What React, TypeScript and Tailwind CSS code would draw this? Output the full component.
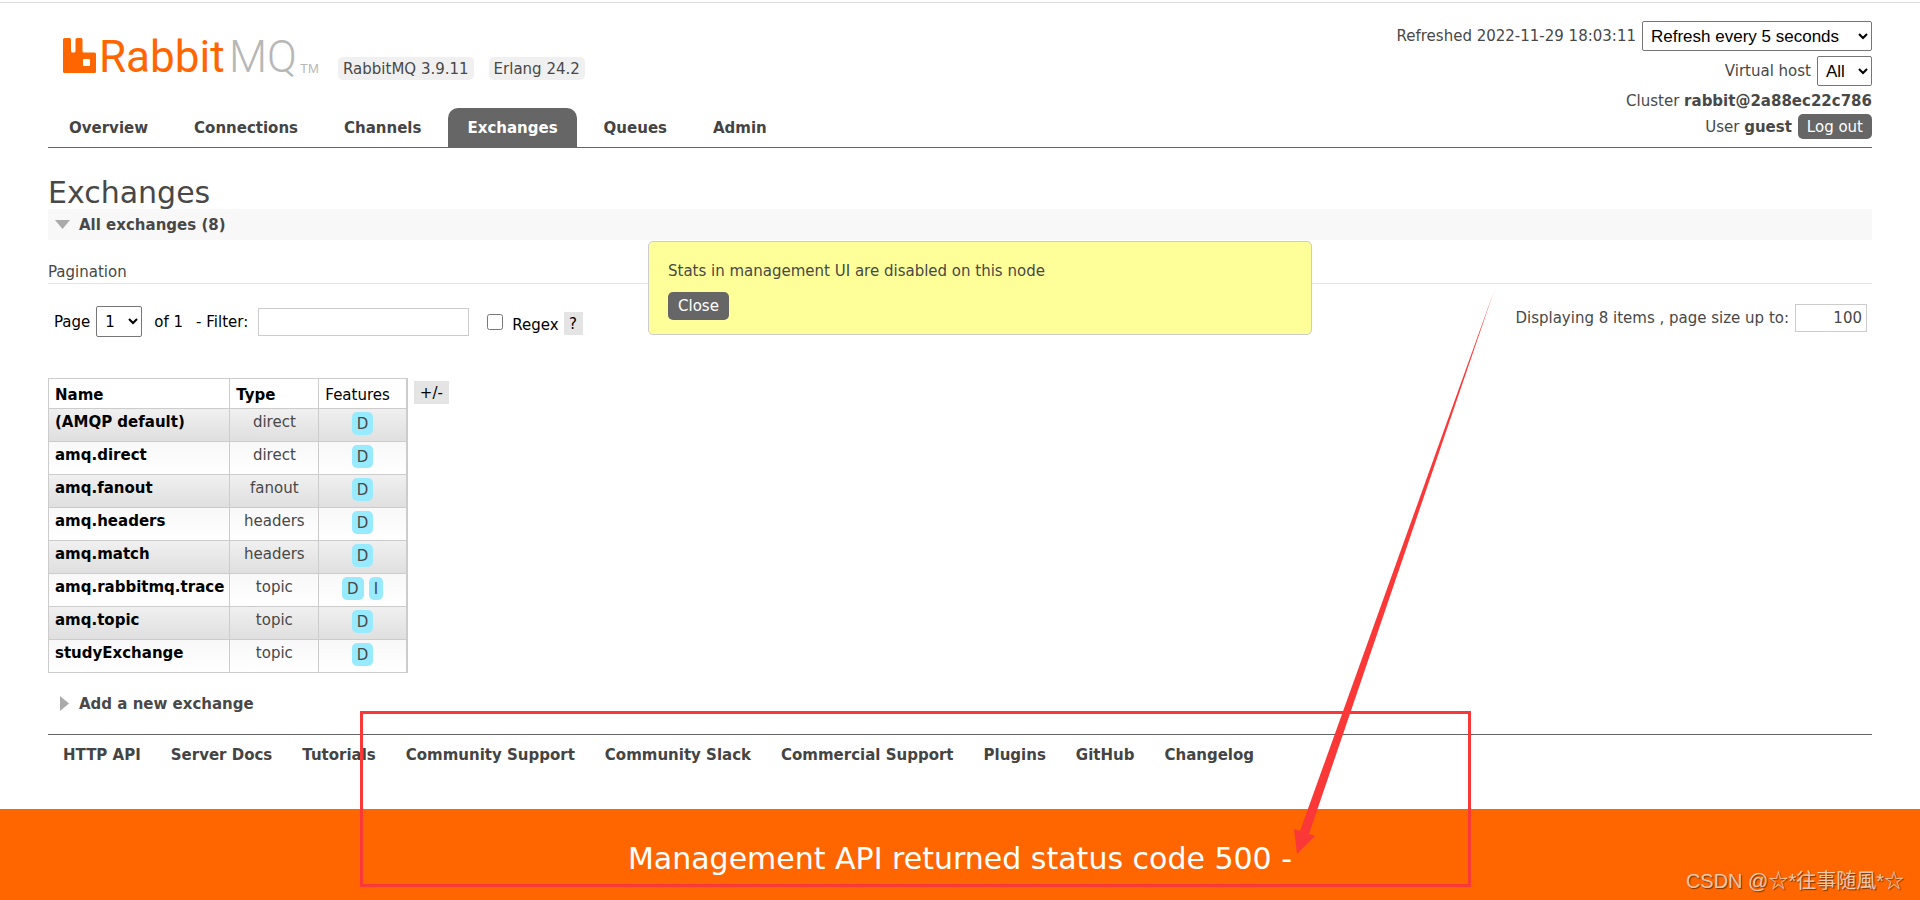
import React from "react";

interface Exchange {
  name: string;
  type: string;
  features: string[];
}

const tabs = ["Overview", "Connections", "Channels", "Exchanges", "Queues", "Admin"];

const exchanges: Exchange[] = [
  { name: "(AMQP default)", type: "direct", features: ["D"] },
  { name: "amq.direct", type: "direct", features: ["D"] },
  { name: "amq.fanout", type: "fanout", features: ["D"] },
  { name: "amq.headers", type: "headers", features: ["D"] },
  { name: "amq.match", type: "headers", features: ["D"] },
  { name: "amq.rabbitmq.trace", type: "topic", features: ["D", "I"] },
  { name: "amq.topic", type: "topic", features: ["D"] },
  { name: "studyExchange", type: "topic", features: ["D"] },
];

const footerLinks = [
  "HTTP API",
  "Server Docs",
  "Tutorials",
  "Community Support",
  "Community Slack",
  "Commercial Support",
  "Plugins",
  "GitHub",
  "Changelog",
];

const Logo = () => (
  <a href="#/" aria-label="RabbitMQ" className="block -mb-[10px]">
    <svg width="258" height="64" viewBox="0 -8 258 64">
      <path
        fill="#f60"
        fillRule="evenodd"
        d="M1.500 4H6.500Q8 4 8 5.500V17Q8 18.500 9.500 18.500H11Q12.500 18.500 12.500 17V5.500Q12.500 4 14 4H18Q19.500 4 19.500 5.500V17Q19.500 18.500 21 18.500H31.500Q33 18.500 33 20V37.500Q33 39 31.500 39H1.500Q0 39 0 37.500V5.500Q0 4 1.500 4ZM21 25Q20 25 20 26V31Q20 32 21 32H26Q27 32 27 31V26Q27 25 26 25Z"
      />
      <text x="36" y="38" fontSize="44" fill="#f60" fontFamily="Roboto, sans-serif">
        Rabbit
      </text>
      <text x="166" y="38" fontSize="44" fill="#b7b7b7" fontFamily="Roboto, sans-serif" fontWeight="300">
        MQ
      </text>
      <text x="237" y="39" fontSize="13" fill="#b7b7b7" fontFamily="'Liberation Sans', sans-serif">
        TM
      </text>
    </svg>
  </a>
);

const Header = () => (
  <header className="border-b border-[#666]">
    <div className="flex justify-between items-end">
      <div>
        <div className="flex items-end ml-[15px] mb-[28px]">
          <Logo />
          <ul className="flex gap-[15px] ml-[17px]">
            <li className="bg-[#f0f0f0] rounded-[5px] px-[5px] h-[23px] leading-6">RabbitMQ 3.9.11</li>
            <li className="bg-[#f0f0f0] rounded-[5px] px-[5px] h-[23px] leading-6">Erlang 24.2</li>
          </ul>
        </div>
        <nav className="flex gap-2 pl-[2px]">
          {tabs.map((tab) => (
            <a
              key={tab}
              href={`#/${tab.toLowerCase()}`}
              className={`font-bold px-[19px] h-[39px] leading-10 rounded-t-[10px] ${
                tab === "Exchanges" ? "bg-[#666] text-white" : "text-[#444]"
              }`}
            >
              {tab}
            </a>
          ))}
        </nav>
      </div>
      <ul className="flex flex-col items-end pb-2">
        <li className="flex items-center gap-[6px] mb-[5px]">
          <label htmlFor="refresh">Refreshed 2022-11-29 18:03:11</label>
          <select id="refresh" className="h-[30px] w-[230px] border border-[#767676] rounded-[2px] bg-white text-black text-[17px] font-['Liberation_Sans',sans-serif] px-1">
            <option>Refresh every 5 seconds</option>
          </select>
        </li>
        <li className="flex items-center gap-[6px]">
          <label htmlFor="vhost">Virtual host</label>
          <select id="vhost" className="h-[30px] w-[55px] border border-[#767676] rounded-[2px] bg-white text-black text-[17px] font-['Liberation_Sans',sans-serif] px-1">
            <option>All</option>
          </select>
        </li>
        <li className="h-[28px] leading-[30px]">
          Cluster <b>rabbit@2a88ec22c786</b>
        </li>
        <li className="flex items-center gap-[6px]">
          <span>
            User <b>guest</b>
          </span>
          <button className="bg-[#666] text-white rounded-[5px] px-[9px] h-[25px]">Log out</button>
        </li>
      </ul>
    </div>
  </header>
);

const Notice = () => (
  <div role="alert" className="absolute left-1/2 top-[241px] -translate-x-1/2 ml-5 w-[664px] bg-[#ff9] border border-[#ccc] rounded-[5px] px-[19px] pt-[19px] pb-[14px]">
    <p className="leading-5 mb-[11px]">Stats in management UI are disabled on this node</p>
    <button className="bg-[#666] text-white rounded-[5px] h-[28px] px-[10px]">Close</button>
  </div>
);

const Pagination = () => (
  <div className="flex justify-between items-start mt-5 h-[74px] pl-[6px] pr-[5px]">
    <div className="flex items-center text-black pt-[2px]">
      <label htmlFor="page">Page</label>
      <select id="page" className="h-[31px] w-[46px] ml-[6px] mr-3 border border-[#767676] rounded-[2px] bg-white px-1">
        <option>1</option>
      </select>
      <span>of 1</span>
      <label htmlFor="filter" className="ml-[13px] mr-[10px]">
        - Filter:
      </label>
      <input id="filter" type="text" className="w-[211px] h-[28px] border border-[#ccc] bg-white px-1" />
      <input id="regex" type="checkbox" className="w-4 h-4 ml-[18px] mr-[9px]" />
      <label htmlFor="regex" className="pt-[6px]">
        Regex
      </label>
      <button className="bg-[#e4e4e4] ml-[5px] mt-1 w-[19px] h-[23px]">?</button>
    </div>
    <div className="flex items-center gap-[6px]">
      <label htmlFor="size">Displaying 8 items , page size up to:</label>
      <input id="size" type="text" defaultValue="100" className="w-[72px] h-[28px] border border-[#ccc] bg-white text-right px-1" />
    </div>
  </div>
);

const ExchangeTable = () => (
  <div className="flex items-start gap-[6px]">
    <table className="border-collapse border border-[#ccc] border-r-2">
      <thead>
        <tr className="h-[30px] text-black text-left">
          <th className="border border-[#ccc] px-[6px] pt-[2px] font-bold">Name</th>
          <th className="border border-[#ccc] px-[6px] pt-[2px] font-bold">Type</th>
          <th className="border border-[#ccc] border-r-2 px-[6px] pt-[2px] font-normal">Features</th>
        </tr>
      </thead>
      <tbody>
        {exchanges.map((exchange, i) => (
          <tr
            key={exchange.name}
            className={`h-[33px] align-top bg-linear-to-b ${
              i % 2 === 0 ? "from-[#f0f0f0] to-[#dfdfdf]" : "from-[#f8f8f8] to-white"
            }`}
          >
            <td className="border border-[#ccc] pl-[6px] pr-[5px] pt-1 leading-[19px]">
              <a href="#/exchanges" className="font-bold text-black">
                {exchange.name}
              </a>
            </td>
            <td className="border border-[#ccc] w-[89px] text-center pt-1 leading-[19px]">{exchange.type}</td>
            <td className="border border-[#ccc] border-r-2 w-[88px] pt-[3px]">
              <div className="flex justify-center gap-[5px]">
                {exchange.features.map((feature) => (
                  <abbr key={feature} className="bg-[#98ebff] rounded-[5px] px-[5px] h-[23px] leading-6 no-underline">
                    {feature}
                  </abbr>
                ))}
              </div>
            </td>
          </tr>
        ))}
      </tbody>
    </table>
    <button className="bg-[#e4e4e4] text-black px-[6px] h-[23px] mt-[3px]">+/-</button>
  </div>
);

// Red frame and arrow drawn over the page
const Annotations = () => (
  <>
    <div className="absolute left-[360px] top-[711px] w-[1111px] h-[176px] border-[3px] border-[#fb3838] pointer-events-none" />
    <svg className="absolute left-[1290px] top-[288px] pointer-events-none" width="210" height="570" viewBox="1290 288 210 570">
      <path fill="#fb3838" d="M1494 291L1309 834L1315 836L1297 854L1294 829L1300 831Z" />
    </svg>
  </>
);

export default function App() {
  return (
    <div className="relative min-h-screen flex flex-col bg-white text-[#484848] text-[15px] leading-5 font-['DejaVu_Sans',Verdana,sans-serif] overflow-hidden">
      <div className="h-[3px] border-b border-[#ddd]" />
      <div className="px-12 pt-[18px]">
        <Header />
        <main>
          <h1 className="text-[30px] leading-8 mt-[29px]">Exchanges</h1>
          <h2 className="flex items-center bg-[#f8f8f8] h-[31px] pl-[7px] gap-[9px] font-bold">
            <svg width="15" height="9" viewBox="0 0 15 9">
              <path fill="#aaa" d="M0 0H15L7.500 9Z" />
            </svg>
            All exchanges (8)
          </h2>
          <h3 className="mt-[22px] pb-px border-b border-[#e4e4e4]">Pagination</h3>
          <Pagination />
          <ExchangeTable />
          <h2 className="flex items-center h-[31px] mt-[15px] pl-3 gap-[10px] font-bold">
            <svg width="9" height="15" viewBox="0 0 9 15">
              <path fill="#aaa" d="M0 0V15L9 7.500Z" />
            </svg>
            Add a new exchange
          </h2>
        </main>
        <footer className="border-t border-[#666] mt-[15px] pt-[10px] pl-[15px] h-[75px]">
          <ul className="flex gap-[30px]">
            {footerLinks.map((link) => (
              <li key={link}>
                <a href="#/" className="font-bold text-[#444]">
                  {link}
                </a>
              </li>
            ))}
          </ul>
        </footer>
      </div>
      <div className="grow bg-[#f60] text-white text-[30px] leading-[36px] text-center pt-[32px]">
        Management API returned status code 500 -
      </div>
      <Notice />
      <Annotations />
      <p className="absolute right-4 bottom-[9px] text-xl leading-5 text-white/70 font-['Liberation_Sans','Noto_Sans_CJK_SC',sans-serif] [text-shadow:1px_1px_1px_rgba(0,0,0,0.5)]">
        CSDN @☆*往事随風*☆
      </p>
    </div>
  );
}
